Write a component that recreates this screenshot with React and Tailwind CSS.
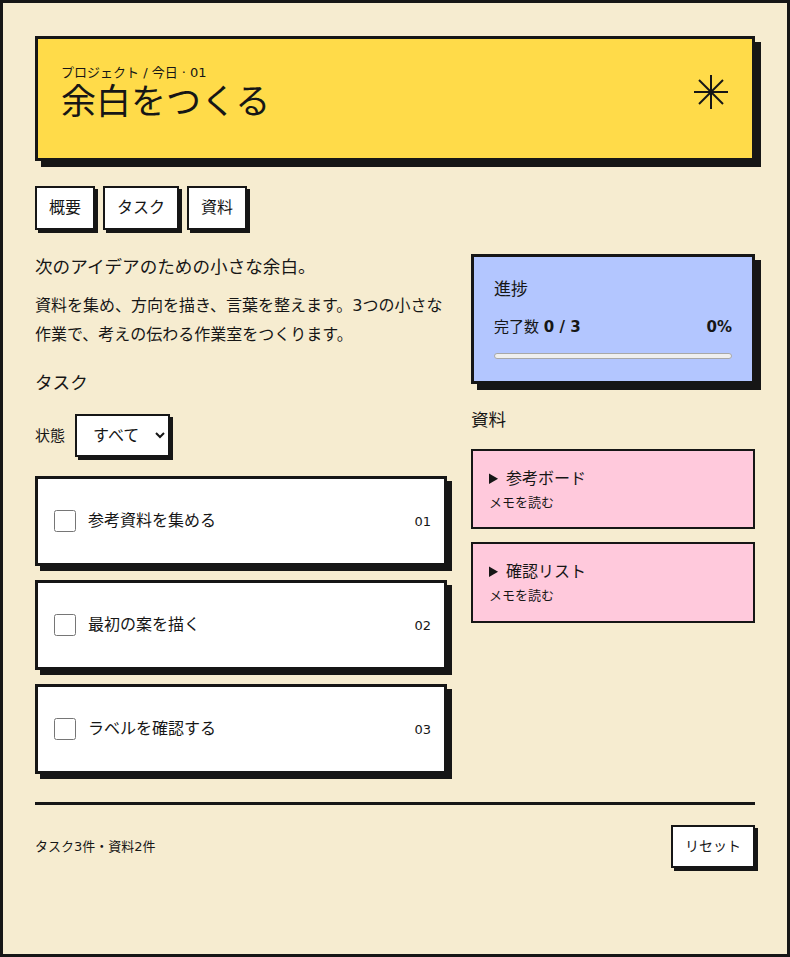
import React, { useState } from "react";

const tasks = [
  { id: 1, title: "参考資料を集める", no: "01" },
  { id: 2, title: "最初の案を描く", no: "02" },
  { id: 3, title: "ラベルを確認する", no: "03" },
];

const notes = [
  { id: 1, title: "参考ボード" },
  { id: 2, title: "確認リスト" },
];

function Asterisk() {
  return (
    <svg width="34" height="34" viewBox="0 0 34 34" fill="none" stroke="#161616" strokeWidth="2">
      <line x1="17" y1="0" x2="17" y2="34" />
      <line x1="0" y1="17" x2="34" y2="17" />
      <line x1="5" y1="5" x2="29" y2="29" />
      <line x1="29" y1="5" x2="5" y2="29" />
    </svg>
  );
}

export default function App() {
  const [done, setDone] = useState({});
  const [filter, setFilter] = useState("all");

  const count = Object.values(done).filter(Boolean).length;
  const pct = Math.round((count / tasks.length) * 100);

  const visible = tasks.filter((t) => {
    if (filter === "done") return done[t.id];
    if (filter === "open") return !done[t.id];
    return true;
  });

  return (
    <div className="min-h-screen border-[3px] border-[#161616] bg-[#f6ecd0] px-8 pt-[33px] text-[#161616] font-['DejaVu_Sans','Noto_Sans_CJK_JP',sans-serif]">
      {/* header */}
      <header className="flex items-center justify-between border-[3px] border-[#161616] bg-[#ffdb49] pl-[23px] pr-6 pt-6 pb-[37px] shadow-[6px_6px_0_#161616]">
        <div>
          <p className="text-[13px] leading-[1.5]">プロジェクト / 今日 · 01</p>
          <h1 className="text-[35px] leading-[1.1]">余白をつくる</h1>
        </div>
        <Asterisk />
      </header>

      {/* tabs */}
      <nav className="mt-[25px] flex gap-2">
        {["概要", "タスク", "資料"].map((t) => (
          <button
            key={t}
            className="border-2 border-[#161616] bg-white px-3 py-2 text-[16px] leading-6 shadow-[3px_3px_0_#161616]"
          >
            {t}
          </button>
        ))}
      </nav>

      <main className="mt-6 grid grid-cols-[1fr_284px] gap-6">
        <section>
          <p className="text-[17.6px] leading-[1.5]">次のアイデアのための小さな余白。</p>
          <p className="mt-3 text-[16px] leading-[1.8]">
            資料を集め、方向を描き、言葉を整えます。3つの小さな作業で、考えの伝わる作業室をつくります。
          </p>

          <h2 className="mt-5 text-[17.6px] leading-[1.5]">タスク</h2>

          <div className="mt-[18px] flex items-center gap-[10px]">
            <label className="text-[15px]">状態</label>
            <select
              value={filter}
              onChange={(e) => setFilter(e.target.value)}
              className="h-[43px] w-[95px] border-2 border-[#161616] bg-white px-3 text-[16px] shadow-[3px_3px_0_#161616]"
            >
              <option value="all">すべて</option>
              <option value="open">未完了</option>
              <option value="done">完了</option>
            </select>
          </div>

          <ul className="mt-[19px] flex flex-col gap-[14px]">
            {visible.map((t) => (
              <li
                key={t.id}
                className="flex items-center justify-between border-[3px] border-[#161616] bg-white pl-4 pr-[13px] py-[30px] shadow-[5px_5px_0_#161616]"
              >
                <label className="flex items-center gap-3 text-[16px] leading-6">
                  <input
                    type="checkbox"
                    checked={!!done[t.id]}
                    onChange={() => setDone({ ...done, [t.id]: !done[t.id] })}
                    className="m-0 h-[22px] w-[22px]"
                  />
                  {t.title}
                </label>
                <span className="text-[13px]">{t.no}</span>
              </li>
            ))}
          </ul>
        </section>

        <aside>
          <div className="border-[3px] border-[#161616] bg-[#b3c6ff] px-5 pt-5 pb-[22px] shadow-[6px_6px_0_#161616]">
            <h3 className="text-[17px] leading-[1.5]">進捗</h3>
            <div className="mt-3 flex items-center justify-between text-[15px] leading-6">
              <span>
                完了数 <b>{count} / {tasks.length}</b>
              </span>
              <b>{pct}%</b>
            </div>
            <div className="mt-[14px] h-[6px] overflow-hidden rounded-full border border-[#a8a8a8] bg-[#efefef]">
              <div className="h-full bg-[#161616]" style={{ width: `${pct}%` }} />
            </div>
          </div>

          <h2 className="mt-[23px] text-[17.6px] leading-[1.5]">資料</h2>

          <div className="mt-4 flex flex-col gap-[13px]">
            {notes.map((n) => (
              <div key={n.id} className="border-2 border-[#161616] bg-[#ffc9dc] px-4 pt-4 pb-[15px]">
                <details>
                  <summary className="cursor-pointer text-[16px] leading-6">{n.title}</summary>
                </details>
                <p className="mt-[2px] text-[13px] leading-[1.5]">メモを読む</p>
              </div>
            ))}
          </div>
        </aside>
      </main>

      <footer className="mt-7 flex items-center justify-between border-t-[3px] border-[#161616] pt-5">
        <p className="text-[13px]">
          タスク{tasks.length}件・資料{notes.length}件
        </p>
        <button
          onClick={() => setDone({})}
          className="border-2 border-[#161616] bg-white px-3 py-[9px] text-[14px] leading-[21px] shadow-[3px_3px_0_#161616]"
        >
          リセット
        </button>
      </footer>
    </div>
  );
}
